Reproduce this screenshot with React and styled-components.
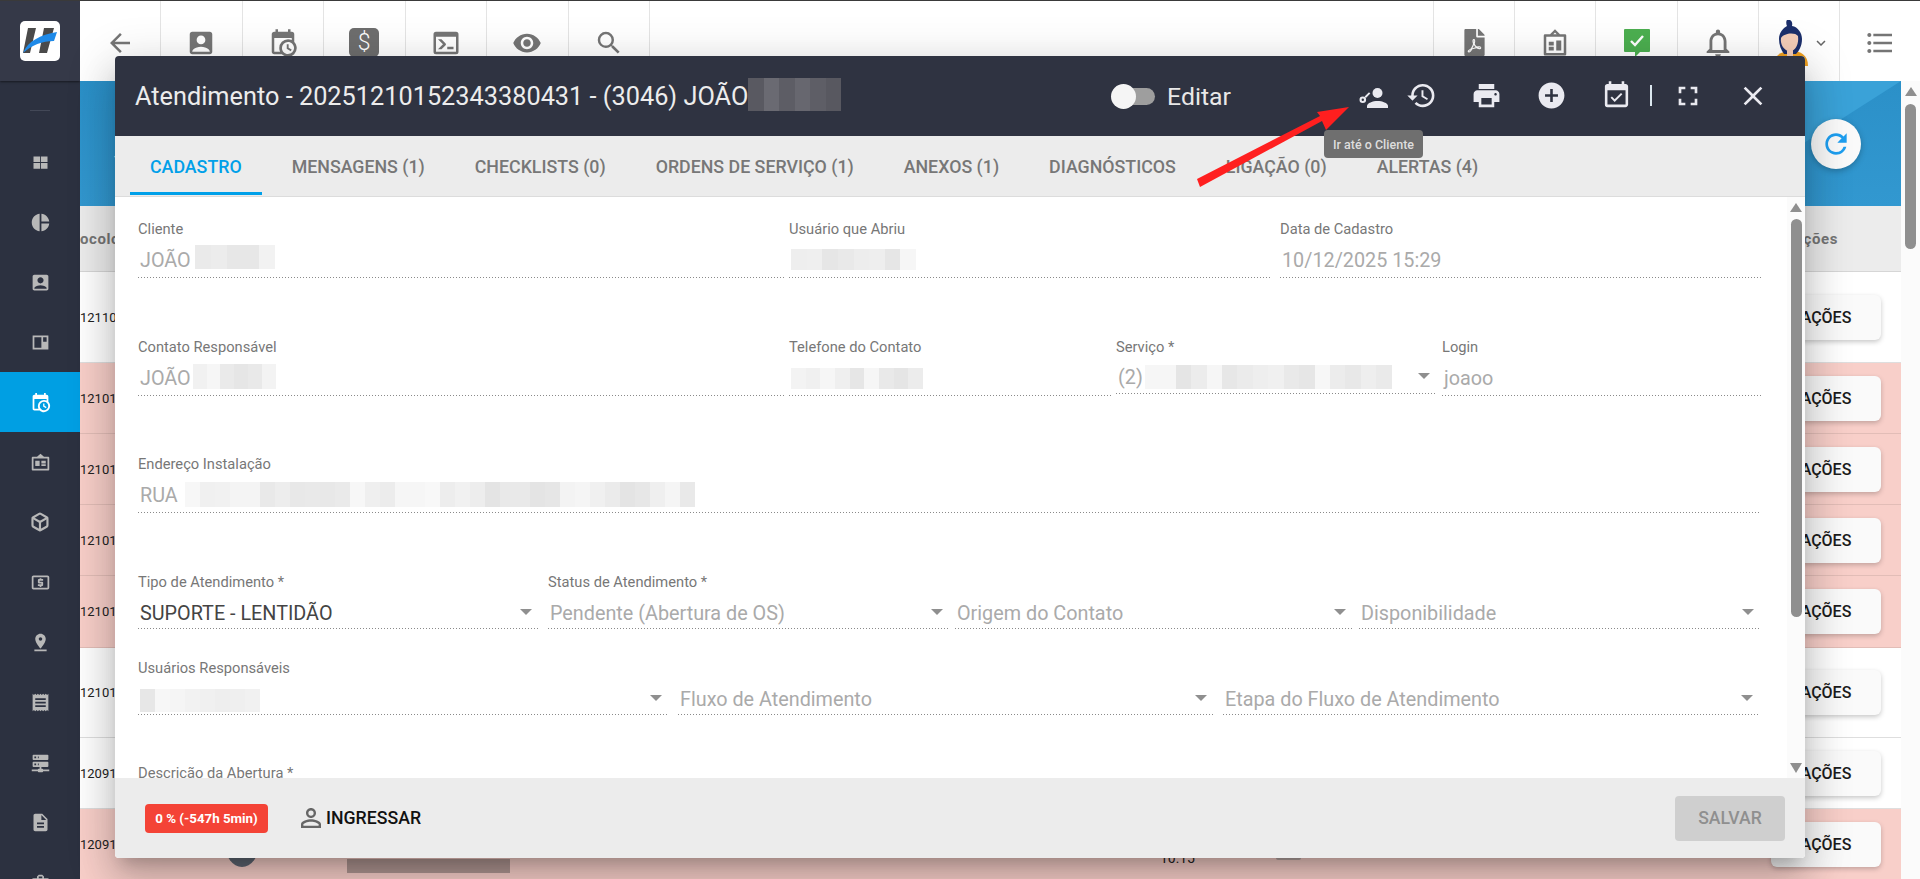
import React from 'react';
import styled, { createGlobalStyle } from 'styled-components';
import {
  MdArrowBack, MdAccountBox, MdVisibility, MdSearch, MdNotificationsNone, MdExpandMore, MdFormatListBulleted,
  MdPieChart, MdLocalAtm, MdPinDrop, MdReceipt, MdDescription, MdBusinessCenter,
  MdHistory, MdPrint, MdAddCircle, MdEventAvailable, MdFullscreen, MdClose, MdRefresh, MdPersonOutline,
} from 'react-icons/md';
import { FaFilePdf } from 'react-icons/fa';
import { Box as BoxIcon } from 'lucide-react';

const Global = createGlobalStyle`
  html, body { margin: 0; padding: 0; height: 100%; overflow: hidden; }
  body { font-family: Roboto, "Liberation Sans", sans-serif; background: #fff; }
  * { box-sizing: border-box; }
`;

const Shell = styled.div`
  position: relative; display: flex; width: 1920px; height: 879px; overflow: hidden;
`;
const Sidebar = styled.aside`
  width: 80px; flex: none; background: #2c3140; display: flex; flex-direction: column; align-items: center;
  position: relative; z-index: 2; height: 100%; overflow: hidden;
`;
const LogoArea = styled.div`
  width: 100%; height: 81px; flex: none; background: #353948; display: flex; align-items: center; justify-content: center;
  border-top: 1px solid #3a3a3a; box-shadow: 0 1px 2px rgba(0,0,0,.5);
`;
const LogoTile = styled.div`
  width: 40px; height: 40px; background: #fff; border-radius: 5px; display: flex;
`;
const SideDivider = styled.div`
  width: 20px; height: 1px; background: #434857; margin: 29px 0 21px; flex: none;
`;
const SideItem = styled.div`
  width: 100%; height: 60px; flex: none; display: flex; align-items: center; justify-content: center;
  color: ${p => (p.$active ? '#fff' : '#b8b8b8')};
  background: ${p => (p.$active ? '#009fe3' : 'transparent')};
  font-size: 21px;
`;
const Main = styled.div`
  flex: 1; min-width: 0; display: flex; flex-direction: column;
`;
const Topbar = styled.header`
  height: 81px; flex: none; background: #fff; display: flex; border-top: 1px solid #3a3a3a;
  position: relative; z-index: 1;
`;
const ToolBtn = styled.div`
  width: ${p => p.$w || 81.5}px; flex: none; display: flex; align-items: center; justify-content: center;
  color: #757575; font-size: ${p => p.$size || 30}px; padding-top: 3px;
  ${p => (p.$left ? 'border-left: 1px solid #e4e4e4;' : 'border-right: 1px solid #e4e4e4;')}
  ${p => (p.$end ? 'border-right: none;' : '')}
`;
const ToolRight = styled.div`
  margin-left: auto; display: flex;
`;
const DollarBox = styled.span`
  width: 30px; height: 29px; background: #6e6e6e; border-radius: 5px; color: #fff; display: flex;
  align-items: center; justify-content: center; font-size: 23px; font-weight: 300; line-height: 1;
`;
const Content = styled.div`
  flex: 1; min-height: 0; display: flex;
`;
const Page = styled.main`
  flex: 1; min-width: 0; display: flex; flex-direction: column; overflow: hidden;
`;
const Hero = styled.section`
  height: 125px; flex: none; position: relative; overflow: hidden; padding: 38px 0 0 34px;
  background: linear-gradient(180deg, #2b90c8, #3298d0);
  &::before {
    content: ''; position: absolute; top: 0; right: 0; width: 196px; height: 125px;
    background: #3aa2d8; clip-path: polygon(0 0, 100% 0, 0 100%);
  }
`;
const HeroTitle = styled.div`
  color: #fff; font-size: 30px; line-height: 28px; font-weight: 500;
`;
const HeroSub = styled.div`
  color: #dfeaf2; font-size: 15px; line-height: 20px; margin-top: 5px;
`;
const RefreshBtn = styled.div`
  position: absolute; top: 38px; right: 40px; width: 50px; height: 50px; border-radius: 50%; background: #fafafa;
  display: flex; align-items: center; justify-content: center; color: #1e9ff0; font-size: 32px;
  box-shadow: 0 2px 6px rgba(0,0,0,.25);
`;
const TableHead = styled.div`
  height: 66px; flex: none; background: #ececec; border-bottom: 1px solid #d6d6d6; display: flex; align-items: center;
  justify-content: space-between; color: #757575; font-size: 15px; font-weight: 700; letter-spacing: .6px;
  padding-right: 63px;
`;
const Row = styled.div`
  height: ${p => p.$h}px; flex: none; display: flex; align-items: center; justify-content: space-between;
  background: ${p => (p.$pink ? '#f8cfc9' : '#fff')};
  border-bottom: 1px solid ${p => (p.$pink ? '#e2bdb7' : '#dedede')};
  padding-right: 20px; font-size: 13px; color: #222;
`;
const RowNo = styled.span`
  width: 36px; flex: none; white-space: nowrap;
`;
const RowMid = styled.div`
  flex: 1; display: flex; align-items: center;
`;
const Avatar = styled.div`
  width: 34px; height: 46px; border-radius: 50%; background: #5f6773; margin-left: 109px; flex: none;
`;
const BlurWrap = styled.span`
  display: inline-flex; width: ${p => p.$w}px; height: ${p => p.$h}px; flex: none; vertical-align: middle;
  margin-left: ${p => p.$ml || 0}px; margin-top: ${p => p.$mt || 0}px; overflow: hidden;
`;
const BlurCell = styled.span`
  flex: 1;
`;
const RowTime = styled.div`
  margin-left: 650px; color: #222; font-size: 14px; margin-top: 28px;
`;
const RowTag = styled.div`
  width: 25px; height: 20px; background: #b8a6a3; margin-left: 81px; margin-top: 12px; border-radius: 2px;
`;
const ActionBtn = styled.div`
  width: 110px; height: 45px; flex: none; background: #fafafa; border-radius: 6px; display: flex; align-items: center;
  justify-content: center; font-size: 16px; font-weight: 500; color: #1c1c1c;
  box-shadow: 0 2px 5px rgba(0,0,0,.22);
`;
const ScrollTrack = styled.div`
  width: ${p => p.$w}px; flex: none; background: #fbfbfb; display: flex; flex-direction: column; align-items: center;
  padding: ${p => p.$pt}px 0 ${p => p.$pb || 0}px;
`;
const ArrowUp = styled.div`
  width: 0; height: 0; border-left: 6px solid transparent; border-right: 6px solid transparent;
  border-bottom: 9px solid #8f8f8f; flex: none;
`;
const ArrowDown = styled.div`
  width: 0; height: 0; border-left: 6px solid transparent; border-right: 6px solid transparent;
  border-top: 10px solid #8f8f8f; flex: none; margin-top: auto;
`;
const Thumb = styled.div`
  width: 11px; height: ${p => p.$h}px; background: #8f8f8f; border-radius: 6px; margin-top: ${p => p.$mt}px; flex: none;
`;

/* Modal */
const Modal = styled.section`
  position: absolute; left: 115px; top: 56px; width: 1690px; height: 802px; z-index: 3; display: flex; flex-direction: column;
  border-radius: 4px; overflow: hidden; background: #fff;
`;
const ModalShadow = styled.div`
  position: absolute; left: 115px; top: 56px; width: 1690px; height: 802px; z-index: 2; border-radius: 4px;
  box-shadow: 0 11px 15px -7px rgba(0,0,0,.2), 0 24px 38px 3px rgba(0,0,0,.14), 0 9px 46px 8px rgba(0,0,0,.12);
`;
const ModalHeader = styled.div`
  height: 80px; flex: none; background: #2f3341; display: flex; align-items: center; padding: 0 23px 0 20px; color: #eee;
`;
const ModalTitle = styled.h2`
  flex: 1; margin: 0; font-size: 25.3px; font-weight: 400; display: flex; align-items: center; color: #ececec; white-space: nowrap;
`;
const ToggleWrap = styled.div`
  display: flex; align-items: center; margin-right: 126px;
`;
const Track = styled.div`
  position: relative; width: 44px; height: 25px; flex: none;
  &::before { content: ''; position: absolute; left: 8px; right: 0; top: 4px; height: 17px; border-radius: 9px; background: #9e9e9e; }
  &::after { content: ''; position: absolute; left: 0; top: 0; width: 25px; height: 25px; border-radius: 50%; background: #f5f5f5; }
`;
const ToggleLabel = styled.span`
  margin-left: 12px; font-size: 24.8px; color: #e8e8e8;
`;
const HeadIcon = styled.div`
  width: ${p => p.$w}px; flex: none; display: flex; align-items: center; justify-content: center; color: #eaeaf0;
  font-size: ${p => p.$size || 31}px; margin-top: ${p => p.$mt ?? -2}px;
`;
const HeadSep = styled.div`
  width: 2px; height: 21px; background: #dbe7ee; margin-left: 1px; flex: none; margin-top: -1px;
`;
const Tooltip = styled.div`
  position: absolute; left: 1324px; top: 130px; width: 99px; height: 28px; border-radius: 4px; background: #6f6f6f;
  color: #dedede; font-size: 12.5px; font-weight: 500; display: flex; align-items: center; justify-content: center; z-index: 5;
`;
const Tabs = styled.nav`
  height: 61px; flex: none; background: #ececec; border-bottom: 1px solid #dcdcdc; display: flex; padding-left: 15px; gap: 10px;
`;
const Tab = styled.div`
  height: 59px; padding: 4px 20px 0; display: flex; align-items: center; font-size: 17.8px; font-weight: 500; white-space: nowrap;
  color: ${p => (p.$active ? '#00a0e9' : '#777')};
  border-bottom: 3px solid ${p => (p.$active ? '#00a0e9' : 'transparent')};
`;
const ModalBody = styled.div`
  flex: 1; min-height: 0; display: flex;
`;
const Form = styled.div`
  flex: 1; min-width: 0; overflow: hidden; padding: 21px 0 0 23px;
`;
const FormRow = styled.div`
  display: flex; align-items: flex-start; margin-top: ${p => p.$mt || 0}px;
`;
const Field = styled.div`
  width: ${p => p.$w}px; margin-left: ${p => p.$ml || 0}px; flex: none;
`;
const Label = styled.div`
  height: 20px; line-height: 22px; font-size: 14.7px; color: #777; white-space: nowrap;
`;
const Control = styled.div`
  height: ${p => p.$h || 40}px; display: flex; align-items: center;
  background: linear-gradient(90deg, #8a8a8a 0 50%, transparent 50% 100%) left bottom / 3px 1px repeat-x;
  font-size: 19.8px; color: ${p => (p.$dark ? '#444' : '#aaa')}; padding: ${p => p.$pt || 5}px 2px 0 2px; white-space: nowrap;
`;
const Caret = styled.span`
  margin-left: auto; width: 0; height: 0; border-left: 6px solid transparent; border-right: 6px solid transparent;
  border-top: 6px solid #8f8f8f; flex: none; margin-right: 5px; margin-top: -3px;
`;
const Footer = styled.div`
  height: 80px; flex: none; background: #ececec; display: flex; align-items: center; padding: 0 20px 0 30px;
`;
const Badge = styled.div`
  width: 123px; height: 29px; background: #f44336; color: #fff; border-radius: 4px; font-size: 13.3px; font-weight: 700;
  display: flex; align-items: center; justify-content: center;
`;
const JoinBtn = styled.div`
  display: flex; align-items: center; font-size: 17.7px; font-weight: 500; color: #111; margin-left: 29px;
`;
const JoinIcon = styled.span`
  display: flex; font-size: 30px; color: #666; margin: 0 0 0 -1px; width: 30px; justify-content: center;
`;
const SaveBtn = styled.div`
  margin-left: auto; width: 110px; height: 45px; background: #cfcfcf; border-radius: 4px; color: #8f8f8f; font-size: 17.6px; font-weight: 500;
  display: flex; align-items: center; justify-content: center;
`;
const ArrowLayer = styled.svg`
  position: absolute; left: 0; top: 0; width: 1920px; height: 879px; z-index: 6; pointer-events: none;
`;
const AvatarSvg = styled.svg`
  width: 38px; height: 46px; flex: none; margin-left: 5px;
`;
const ChevronSpot = styled.span`
  display: flex; font-size: 18px; color: #666; margin-left: 2px;
`;

const Svg = ({ size = '1em', children }) => (
  <svg width={size} height={size} viewBox="0 0 24 24" fill="currentColor">{children}</svg>
);
const P = d => ({ size }) => <Svg size={size}><path fillRule="evenodd" d={d} /></Svg>;

const CalendarClock = ({ size }) => (
  <Svg size={size}><path d="M15,13H16.5V15.82L18.94,17.23L18.19,18.53L15,16.69V13M19,8H5V19H9.67C9.24,18.09 9,17.07 9,16A7,7 0 0,1 16,9C17.07,9 18.09,9.24 19,9.67V8M5,21C3.89,21 3,20.1 3,19V5C3,3.89 3.89,3 5,3H6V1H8V3H16V1H18V3H19A2,2 0 0,1 21,5V11.1C22.24,12.36 23,14.09 23,16A7,7 0 0,1 16,23C14.09,23 12.36,22.24 11.1,21H5M16,11.15A4.85,4.85 0 0,0 11.15,16C11.15,18.68 13.32,20.85 16,20.85A4.85,4.85 0 0,0 20.85,16C20.85,13.32 18.68,11.15 16,11.15Z" /></Svg>
);
const ServerNetwork = ({ size }) => (
  <Svg size={size}><path d="M13,19H14A1,1 0 0,1 15,20H22V22H15A1,1 0 0,1 14,23H10A1,1 0 0,1 9,22H2V20H9A1,1 0 0,1 10,19H11V17H4A1,1 0 0,1 3,16V12A1,1 0 0,1 4,11H20A1,1 0 0,1 21,12V16A1,1 0 0,1 20,17H13V19M4,3H20A1,1 0 0,1 21,4V8A1,1 0 0,1 20,9H4A1,1 0 0,1 3,8V4A1,1 0 0,1 4,3M9,7H10V5H9V7M9,15H10V13H9V15M5,5V7H7V5H5M5,13V15H7V13H5Z" /></Svg>
);
const ConsoleIcon = ({ size }) => (
  <Svg size={size}><path d="M20,19V7H4V19H20M20,3A2,2 0 0,1 22,5V19A2,2 0 0,1 20,21H4A2,2 0 0,1 2,19V5A2,2 0 0,1 4,3H20M13,17V15H18V17H13M9.58,13L5.57,9H8.4L11.7,12.3C12.09,12.69 12.09,13.33 11.7,13.72L8.42,17H5.59L9.58,13Z" /></Svg>
);
const PanesIcon = P('M4 5h7.500v6.500H4zM12.500 5H20v6.500h-7.500zM4 12.500h7.500V19H4zM12.500 12.500H20V19h-7.500z');
const QuiltIcon = P('M3 4h18v16H3zM5 6v12h8V6zM15 6v5h4V6z');
const BoardIcon = ({ size }) => (
  <Svg size={size}>
    <path fillRule="evenodd" d="M12 1l4 4h4a1 1 0 0 1 1 1v15a1 1 0 0 1-1 1H4a1 1 0 0 1-1-1V6a1 1 0 0 1 1-1h4zM12 3.600L10.600 5h2.800zM5 7v13h14V7z" />
    <path d="M7 11h4v3H7zM7 15h4v3H7zM13 10h4v8h-4z" />
  </Svg>
);
const BadgeBoard = ({ size }) => (
  <Svg size={size}>
    <path fillRule="evenodd" d="M12 2l4 3.500h5a1 1 0 0 1 1 1V20a1 1 0 0 1-1 1H3a1 1 0 0 1-1-1V6.500a1 1 0 0 1 1-1h5zM4 7.500V19h16V7.500z" />
    <path d="M6 10h5v6H6zM13 10h5v3h-5zM13 14h5v2h-5z" />
  </Svg>
);
const CommentCheck = () => (
  <svg width="26" height="28" viewBox="0 0 26 28">
    <path fill="#4caf50" d="M1 0h24a1 1 0 0 1 1 1v21a1 1 0 0 1-1 1h-9l-5 5v-5H1a1 1 0 0 1-1-1V1a1 1 0 0 1 1-1z" />
    <path d="M7 12l4 4 8-9" fill="none" stroke="#fff" strokeWidth="2.400" />
  </svg>
);
const PersonKey = () => (
  <svg width="29" height="20" viewBox="0 0 29 20" fill="currentColor">
    <circle cx="18.500" cy="5" r="5" />
    <path d="M8 20v-2c0-3 6-5 10.500-5S29 15 29 18v2z" />
    <path fillRule="evenodd" d="M3.800 8.500a3.300 3.300 0 1 1 0 6.600 3.300 3.300 0 0 1 0-6.600zM3.800 10.600a1.200 1.200 0 1 0 0 2.400 1.200 1.200 0 0 0 0-2.400z" />
    <path d="M5.600 8.600L10 4.200l1.300 1.300-4.400 4.400z" />
  </svg>
);

const blurShades = (seed, n, dark) => {
  const out = [];
  let s = seed;
  for (let i = 0; i < n; i++) {
    s = (s * 9301 + 49297) % 233280;
    const v = dark ? 74 + Math.round((s / 233280) * 36) : 228 + Math.round((s / 233280) * 20);
    out.push(`rgb(${v},${v},${dark ? v + 8 : v})`);
  }
  return out;
};
const Blur = ({ w, h, ml, mt, seed = 3, dark, shade }) => {
  const n = Math.max(4, Math.round(w / 15));
  return (
    <BlurWrap $w={w} $h={h} $ml={ml} $mt={mt}>
      {blurShades(seed, n, dark).map((c, i) => <BlurCell key={i} style={{ background: shade || c }} />)}
    </BlurWrap>
  );
};

const sideIcons = [
  <PanesIcon />, <MdPieChart />, <MdAccountBox />, <QuiltIcon />, <CalendarClock />, <BadgeBoard />,
  <BoxIcon size="0.95em" strokeWidth={2.6} />, <MdLocalAtm />, <MdPinDrop />, <MdReceipt />, <ServerNetwork />, <MdDescription />, <MdBusinessCenter />,
];
const rows = [
  ['12110', 91, false], ['12101', 71, true], ['12101', 71, true], ['12101', 71, true], ['12101', 72, true],
  ['12101', 90, false], ['12091', 71, false], ['12091', 71, true],
];
const tabs = ['CADASTRO', 'MENSAGENS (1)', 'CHECKLISTS (0)', 'ORDENS DE SERVIÇO (1)', 'ANEXOS (1)', 'DIAGNÓSTICOS', 'LIGAÇÃO (0)', 'ALERTAS (4)'];

export default function App() {
  return (
    <Shell>
      <Global />
      <Sidebar>
        <LogoArea>
          <LogoTile>
            <svg width="40" height="40" viewBox="0 0 40 40">
              <path fill="#4a4a4a" d="M8 7h8l-6 25H3zM24 7h10l-7 25h-8z" />
              <path fill="#1f8ae8" d="M3 32C8 20 20 14 37 11l-3 9C22 20 12 24 3 32z" />
            </svg>
          </LogoTile>
        </LogoArea>
        <SideDivider />
        {sideIcons.map((icon, i) => <SideItem key={i} $active={i === 4}>{icon}</SideItem>)}
      </Sidebar>
      <Main>
        <Topbar>
          <ToolBtn $w={81}><MdArrowBack /></ToolBtn>
          <ToolBtn><MdAccountBox /></ToolBtn>
          <ToolBtn><CalendarClock /></ToolBtn>
          <ToolBtn><DollarBox>$</DollarBox></ToolBtn>
          <ToolBtn><ConsoleIcon /></ToolBtn>
          <ToolBtn><MdVisibility /></ToolBtn>
          <ToolBtn><MdSearch /></ToolBtn>
          <ToolRight>
            <ToolBtn $left $w={81.2} $size={27}><FaFilePdf /></ToolBtn>
            <ToolBtn $left $w={81.2}><BoardIcon /></ToolBtn>
            <ToolBtn $left $w={81.2}><CommentCheck /></ToolBtn>
            <ToolBtn $left $w={81.2} $size={34}><MdNotificationsNone /></ToolBtn>
            <ToolBtn $left $w={81.2}>
              <AvatarSvg viewBox="0 0 38 46">
                <path fill="#f0a020" d="M2 46c0-11 7-15 17-15s17 4 17 15z" />
                <path fill="#1c2f6b" d="M15 0c4-1 6 2 5 6 6 1 10 7 10 13 0 7-3 12-6 15h-12c-3-4-5-9-5-15 0-6 4-11 8-13-1-2-1-5 0-6z" />
                <path fill="#f4cdb8" d="M9 18c3-5 14-6 17-2 1 8-2 14-8 16-6-2-10-7-9-14zM15 30h6v7h-6z" />
                <path fill="#3a9a4a" d="M15 37h6v4h-6z" />
              </AvatarSvg>
              <ChevronSpot><MdExpandMore /></ChevronSpot>
            </ToolBtn>
            <ToolBtn $left $end $w={81} $size={32}><MdFormatListBulleted /></ToolBtn>
          </ToolRight>
        </Topbar>
        <Content>
          <Page>
            <Hero>
              <HeroTitle>Painel</HeroTitle>
              <HeroSub>Todos</HeroSub>
              <RefreshBtn><MdRefresh /></RefreshBtn>
            </Hero>
            <TableHead><span>ocolo</span><span>Ações</span></TableHead>
            {rows.map(([no, h, pink], i) => (
              <Row key={i} $h={h} $pink={pink}>
                <RowNo>{no}</RowNo>
                {i === 7 && (
                  <RowMid>
                    <Avatar />
                    <Blur w={163} h={14} ml={88} mt={44} seed={9} shade="#b09692" />
                    <RowTime>10:15</RowTime>
                    <RowTag />
                  </RowMid>
                )}
                <ActionBtn>AÇÕES</ActionBtn>
              </Row>
            ))}
          </Page>
          <ScrollTrack $w={19} $pt={6}>
            <ArrowUp />
            <Thumb $h={145} $mt={8} />
          </ScrollTrack>
        </Content>
      </Main>

      <ModalShadow />
      <Modal>
        <ModalHeader>
          <ModalTitle>
            Atendimento - 20251210152343380431 - (3046) JOÃO
            <Blur w={93} h={33} seed={5} dark mt={-3} />
          </ModalTitle>
          <ToggleWrap><Track /><ToggleLabel>Editar</ToggleLabel></ToggleWrap>
          <HeadIcon $w={32} $mt={4}><PersonKey /></HeadIcon>
          <HeadIcon $w={64}><MdHistory /></HeadIcon>
          <HeadIcon $w={66}><MdPrint /></HeadIcon>
          <HeadIcon $w={64}><MdAddCircle /></HeadIcon>
          <HeadIcon $w={66}><MdEventAvailable /></HeadIcon>
          <HeadSep />
          <HeadIcon $w={71} $size={32} $mt={0}><MdFullscreen /></HeadIcon>
          <HeadIcon $w={59} $size={32} $mt={0}><MdClose /></HeadIcon>
        </ModalHeader>
        <Tabs>
          {tabs.map((t, i) => <Tab key={t} $active={i === 0}>{t}</Tab>)}
        </Tabs>
        <ModalBody>
          <Form>
            <FormRow>
              <Field $w={648}>
                <Label>Cliente</Label>
                <Control $h={40}>JOÃO<Blur w={80} h={24} ml={4} seed={2} mt={-7} /></Control>
              </Field>
              <Field $w={483} $ml={3}>
                <Label>Usuário que Abriu</Label>
                <Control $h={40}><Blur w={125} h={21} seed={7} mt={-2} /></Control>
              </Field>
              <Field $w={481} $ml={8}>
                <Label>Data de Cadastro</Label>
                <Control $h={40}>10/12/2025 15:29</Control>
              </Field>
            </FormRow>
            <FormRow $mt={58}>
              <Field $w={648}>
                <Label>Contato Responsável</Label>
                <Control $h={40}>JOÃO<Blur w={83} h={25} ml={2} seed={11} mt={-4} /></Control>
              </Field>
              <Field $w={322} $ml={3}>
                <Label>Telefone do Contato</Label>
                <Control $h={40}><Blur w={132} h={21} seed={13} /></Control>
              </Field>
              <Field $w={321} $ml={5}>
                <Label>Serviço *</Label>
                <Control $h={38}>(2)<Blur w={247} h={24} ml={2} seed={17} mt={-1} /><Caret /></Control>
              </Field>
              <Field $w={320} $ml={5}>
                <Label>Login</Label>
                <Control $h={40}>joaoo</Control>
              </Field>
            </FormRow>
            <FormRow $mt={57}>
              <Field $w={1623}>
                <Label>Endereço Instalação</Label>
                <Control $h={40}>RUA<Blur w={510} h={25} ml={7} seed={19} mt={-2} /></Control>
              </Field>
            </FormRow>
            <FormRow $mt={58}>
              <Field $w={401}>
                <Label>Tipo de Atendimento *</Label>
                <Control $h={38} $pt={7} $dark>SUPORTE - LENTIDÃO<Caret /></Control>
              </Field>
              <Field $w={402} $ml={9}>
                <Label>Status de Atendimento *</Label>
                <Control $h={38} $pt={7}>Pendente (Abertura de OS)<Caret /></Control>
              </Field>
              <Field $w={398} $ml={5}>
                <Label>&nbsp;</Label>
                <Control $h={38} $pt={7}>Origem do Contato<Caret /></Control>
              </Field>
              <Field $w={402} $ml={6}>
                <Label>&nbsp;</Label>
                <Control $h={38} $pt={7}>Disponibilidade<Caret /></Control>
              </Field>
            </FormRow>
            <FormRow $mt={28}>
              <Field $w={531}>
                <Label>Usuários Responsáveis</Label>
                <Control $h={38} $pt={7}><Blur w={120} h={23} seed={23} mt={2} /><Caret /></Control>
              </Field>
              <Field $w={536} $ml={9}>
                <Label>&nbsp;</Label>
                <Control $h={38} $pt={7}>Fluxo de Atendimento<Caret /></Control>
              </Field>
              <Field $w={537} $ml={9}>
                <Label>&nbsp;</Label>
                <Control $h={38} $pt={7}>Etapa do Fluxo de Atendimento<Caret /></Control>
              </Field>
            </FormRow>
            <FormRow $mt={47}>
              <Field $w={800}>
                <Label>Descrição da Abertura *</Label>
              </Field>
            </FormRow>
          </Form>
          <ScrollTrack $w={18} $pt={6} $pb={5}>
            <ArrowUp />
            <Thumb $h={398} $mt={7} />
            <ArrowDown />
          </ScrollTrack>
        </ModalBody>
        <Footer>
          <Badge>0 % (-547h 5min)</Badge>
          <JoinBtn><JoinIcon><MdPersonOutline /></JoinIcon>INGRESSAR</JoinBtn>
          <SaveBtn>SALVAR</SaveBtn>
        </Footer>
      </Modal>
      <Tooltip>Ir até o Cliente</Tooltip>
      <ArrowLayer viewBox="0 0 1920 879">
        <polygon fill="#ff1f1f" points="1349,107 1326,130 1322,121 1200,187 1197,179 1320,116 1317,112" />
      </ArrowLayer>
    </Shell>
  );
}
